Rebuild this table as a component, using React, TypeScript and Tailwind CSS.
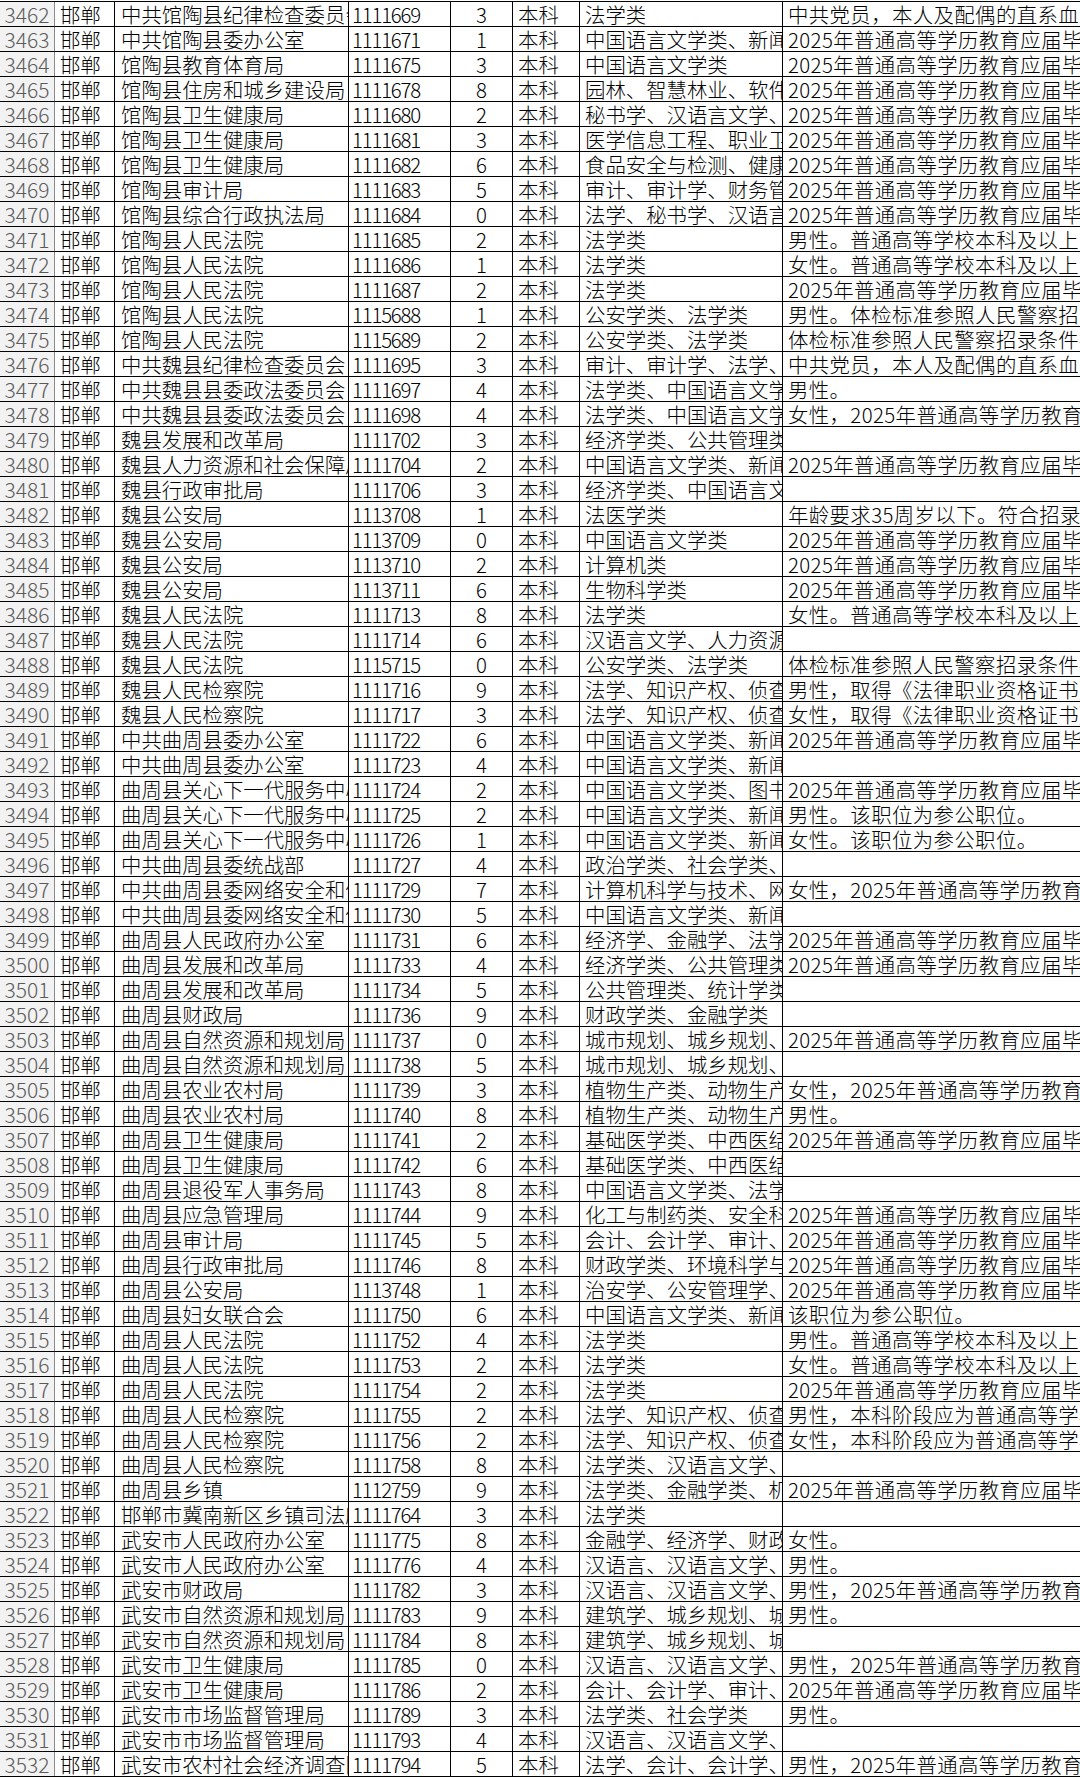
type Row = [number, string, string, string, string, string, string, string];

const rows: Row[] = [
  [3462, "邯郸", "中共馆陶县纪律检查委员会", "1111669", "3", "本科", "法学类", "中共党员，本人及配偶的直系血亲、三代以内旁系血亲"],
  [3463, "邯郸", "中共馆陶县委办公室", "1111671", "1", "本科", "中国语言文学类、新闻传播学类", "2025年普通高等学历教育应届毕业生"],
  [3464, "邯郸", "馆陶县教育体育局", "1111675", "3", "本科", "中国语言文学类", "2025年普通高等学历教育应届毕业生"],
  [3465, "邯郸", "馆陶县住房和城乡建设局", "1111678", "8", "本科", "园林、智慧林业、软件工程", "2025年普通高等学历教育应届毕业生"],
  [3466, "邯郸", "馆陶县卫生健康局", "1111680", "2", "本科", "秘书学、汉语言文学、汉语言", "2025年普通高等学历教育应届毕业生"],
  [3467, "邯郸", "馆陶县卫生健康局", "1111681", "3", "本科", "医学信息工程、职业卫生与职业医学", "2025年普通高等学历教育应届毕业生"],
  [3468, "邯郸", "馆陶县卫生健康局", "1111682", "6", "本科", "食品安全与检测、健康服务与管理", "2025年普通高等学历教育应届毕业生"],
  [3469, "邯郸", "馆陶县审计局", "1111683", "5", "本科", "审计、审计学、财务管理", "2025年普通高等学历教育应届毕业生"],
  [3470, "邯郸", "馆陶县综合行政执法局", "1111684", "0", "本科", "法学、秘书学、汉语言文学", "2025年普通高等学历教育应届毕业生"],
  [3471, "邯郸", "馆陶县人民法院", "1111685", "2", "本科", "法学类", "男性。普通高等学校本科及以上学历"],
  [3472, "邯郸", "馆陶县人民法院", "1111686", "1", "本科", "法学类", "女性。普通高等学校本科及以上学历"],
  [3473, "邯郸", "馆陶县人民法院", "1111687", "2", "本科", "法学类", "2025年普通高等学历教育应届毕业生"],
  [3474, "邯郸", "馆陶县人民法院", "1115688", "1", "本科", "公安学类、法学类", "男性。体检标准参照人民警察招录条件"],
  [3475, "邯郸", "馆陶县人民法院", "1115689", "2", "本科", "公安学类、法学类", "体检标准参照人民警察招录条件执行"],
  [3476, "邯郸", "中共魏县纪律检查委员会", "1111695", "3", "本科", "审计、审计学、法学、会计学", "中共党员，本人及配偶的直系血亲、三代以内旁系血亲"],
  [3477, "邯郸", "中共魏县县委政法委员会", "1111697", "4", "本科", "法学类、中国语言文学类", "男性。"],
  [3478, "邯郸", "中共魏县县委政法委员会", "1111698", "4", "本科", "法学类、中国语言文学类", "女性，2025年普通高等学历教育应届毕业生"],
  [3479, "邯郸", "魏县发展和改革局", "1111702", "3", "本科", "经济学类、公共管理类", ""],
  [3480, "邯郸", "魏县人力资源和社会保障局", "1111704", "2", "本科", "中国语言文学类、新闻传播学类", "2025年普通高等学历教育应届毕业生"],
  [3481, "邯郸", "魏县行政审批局", "1111706", "3", "本科", "经济学类、中国语言文学类", ""],
  [3482, "邯郸", "魏县公安局", "1113708", "1", "本科", "法医学类", "年龄要求35周岁以下。符合招录条件"],
  [3483, "邯郸", "魏县公安局", "1113709", "0", "本科", "中国语言文学类", "2025年普通高等学历教育应届毕业生"],
  [3484, "邯郸", "魏县公安局", "1113710", "2", "本科", "计算机类", "2025年普通高等学历教育应届毕业生"],
  [3485, "邯郸", "魏县公安局", "1113711", "6", "本科", "生物科学类", "2025年普通高等学历教育应届毕业生"],
  [3486, "邯郸", "魏县人民法院", "1111713", "8", "本科", "法学类", "女性。普通高等学校本科及以上学历"],
  [3487, "邯郸", "魏县人民法院", "1111714", "6", "本科", "汉语言文学、人力资源管理", ""],
  [3488, "邯郸", "魏县人民法院", "1115715", "0", "本科", "公安学类、法学类", "体检标准参照人民警察招录条件执行"],
  [3489, "邯郸", "魏县人民检察院", "1111716", "9", "本科", "法学、知识产权、侦查学", "男性，取得《法律职业资格证书》"],
  [3490, "邯郸", "魏县人民检察院", "1111717", "3", "本科", "法学、知识产权、侦查学", "女性，取得《法律职业资格证书》"],
  [3491, "邯郸", "中共曲周县委办公室", "1111722", "6", "本科", "中国语言文学类、新闻传播学类", "2025年普通高等学历教育应届毕业生"],
  [3492, "邯郸", "中共曲周县委办公室", "1111723", "4", "本科", "中国语言文学类、新闻传播学类", ""],
  [3493, "邯郸", "曲周县关心下一代服务中心", "1111724", "2", "本科", "中国语言文学类、图书情报与档案管理类", "2025年普通高等学历教育应届毕业生"],
  [3494, "邯郸", "曲周县关心下一代服务中心", "1111725", "2", "本科", "中国语言文学类、新闻传播学类", "男性。该职位为参公职位。"],
  [3495, "邯郸", "曲周县关心下一代服务中心", "1111726", "1", "本科", "中国语言文学类、新闻传播学类", "女性。该职位为参公职位。"],
  [3496, "邯郸", "中共曲周县委统战部", "1111727", "4", "本科", "政治学类、社会学类、民族学类", ""],
  [3497, "邯郸", "中共曲周县委网络安全和信息化委员会办公室", "1111729", "7", "本科", "计算机科学与技术、网络工程", "女性，2025年普通高等学历教育应届毕业生"],
  [3498, "邯郸", "中共曲周县委网络安全和信息化委员会办公室", "1111730", "5", "本科", "中国语言文学类、新闻传播学类", ""],
  [3499, "邯郸", "曲周县人民政府办公室", "1111731", "6", "本科", "经济学、金融学、法学类", "2025年普通高等学历教育应届毕业生"],
  [3500, "邯郸", "曲周县发展和改革局", "1111733", "4", "本科", "经济学类、公共管理类", "2025年普通高等学历教育应届毕业生"],
  [3501, "邯郸", "曲周县发展和改革局", "1111734", "5", "本科", "公共管理类、统计学类", ""],
  [3502, "邯郸", "曲周县财政局", "1111736", "9", "本科", "财政学类、金融学类", ""],
  [3503, "邯郸", "曲周县自然资源和规划局", "1111737", "0", "本科", "城市规划、城乡规划、土地资源管理", "2025年普通高等学历教育应届毕业生"],
  [3504, "邯郸", "曲周县自然资源和规划局", "1111738", "5", "本科", "城市规划、城乡规划、土地资源管理", ""],
  [3505, "邯郸", "曲周县农业农村局", "1111739", "3", "本科", "植物生产类、动物生产类", "女性，2025年普通高等学历教育应届毕业生"],
  [3506, "邯郸", "曲周县农业农村局", "1111740", "8", "本科", "植物生产类、动物生产类", "男性。"],
  [3507, "邯郸", "曲周县卫生健康局", "1111741", "2", "本科", "基础医学类、中西医结合类", "2025年普通高等学历教育应届毕业生"],
  [3508, "邯郸", "曲周县卫生健康局", "1111742", "6", "本科", "基础医学类、中西医结合类", ""],
  [3509, "邯郸", "曲周县退役军人事务局", "1111743", "8", "本科", "中国语言文学类、法学类", ""],
  [3510, "邯郸", "曲周县应急管理局", "1111744", "9", "本科", "化工与制药类、安全科学与工程类", "2025年普通高等学历教育应届毕业生"],
  [3511, "邯郸", "曲周县审计局", "1111745", "5", "本科", "会计、会计学、审计、审计学", "2025年普通高等学历教育应届毕业生"],
  [3512, "邯郸", "曲周县行政审批局", "1111746", "8", "本科", "财政学类、环境科学与工程类", "2025年普通高等学历教育应届毕业生"],
  [3513, "邯郸", "曲周县公安局", "1113748", "1", "本科", "治安学、公安管理学、侦查学", "2025年普通高等学历教育应届毕业生"],
  [3514, "邯郸", "曲周县妇女联合会", "1111750", "6", "本科", "中国语言文学类、新闻传播学类", "该职位为参公职位。"],
  [3515, "邯郸", "曲周县人民法院", "1111752", "4", "本科", "法学类", "男性。普通高等学校本科及以上学历"],
  [3516, "邯郸", "曲周县人民法院", "1111753", "2", "本科", "法学类", "女性。普通高等学校本科及以上学历"],
  [3517, "邯郸", "曲周县人民法院", "1111754", "2", "本科", "法学类", "2025年普通高等学历教育应届毕业生"],
  [3518, "邯郸", "曲周县人民检察院", "1111755", "2", "本科", "法学、知识产权、侦查学", "男性，本科阶段应为普通高等学校"],
  [3519, "邯郸", "曲周县人民检察院", "1111756", "2", "本科", "法学、知识产权、侦查学", "女性，本科阶段应为普通高等学校"],
  [3520, "邯郸", "曲周县人民检察院", "1111758", "8", "本科", "法学类、汉语言文学、秘书学", ""],
  [3521, "邯郸", "曲周县乡镇", "1112759", "9", "本科", "法学类、金融学类、机械类", "2025年普通高等学历教育应届毕业生"],
  [3522, "邯郸", "邯郸市冀南新区乡镇司法所", "1111764", "3", "本科", "法学类", ""],
  [3523, "邯郸", "武安市人民政府办公室", "1111775", "8", "本科", "金融学、经济学、财政学", "女性。"],
  [3524, "邯郸", "武安市人民政府办公室", "1111776", "4", "本科", "汉语言、汉语言文学、秘书学", "男性。"],
  [3525, "邯郸", "武安市财政局", "1111782", "3", "本科", "汉语言、汉语言文学、会计学", "男性，2025年普通高等学历教育应届毕业生"],
  [3526, "邯郸", "武安市自然资源和规划局", "1111783", "9", "本科", "建筑学、城乡规划、城市设计", "男性。"],
  [3527, "邯郸", "武安市自然资源和规划局", "1111784", "8", "本科", "建筑学、城乡规划、城市设计", ""],
  [3528, "邯郸", "武安市卫生健康局", "1111785", "0", "本科", "汉语言、汉语言文学、秘书学", "男性，2025年普通高等学历教育应届毕业生"],
  [3529, "邯郸", "武安市卫生健康局", "1111786", "2", "本科", "会计、会计学、审计、审计学", "2025年普通高等学历教育应届毕业生"],
  [3530, "邯郸", "武安市市场监督管理局", "1111789", "3", "本科", "法学类、社会学类", "男性。"],
  [3531, "邯郸", "武安市市场监督管理局", "1111793", "4", "本科", "汉语言、汉语言文学、秘书学", ""],
  [3532, "邯郸", "武安市农村社会经济调查队", "1111794", "5", "本科", "法学、会计、会计学、审计学", "男性，2025年普通高等学历教育应届毕业生"],
];

const cell = "shrink-0 overflow-hidden whitespace-nowrap border-r border-black";

export default function App() {
  return (
    <div
      className="w-[1080px] h-[1778px] overflow-hidden bg-white pt-px text-[20.4px] leading-[24px] font-light text-black"
      style={{ fontFamily: '"Noto Sans CJK SC", "Noto Sans", sans-serif' }}
    >
      <div className="border-t border-black">
        {rows.map((r) => (
          <div key={r[0]} className="flex h-[25px] border-b border-black">
            <div className="shrink-0 w-[55px] bg-[#f2f2f2] border-r border-[#8a8a8a] text-center text-[#5a5a5a] text-[21px]">
              {r[0]}
            </div>
            <div className={`${cell} w-[60px] pl-[5px]`}>{r[1]}</div>
            <div className={`${cell} w-[234px] pl-[6px]`}>{r[2]}</div>
            <div className={`${cell} w-[102px] pl-[3px] tracking-[-1.2px]`}>{r[3]}</div>
            <div className={`${cell} w-[62px] text-center`}>{r[4]}</div>
            <div className={`${cell} w-[67px] pl-[5px]`}>{r[5]}</div>
            <div className={`${cell} w-[203px] pl-[5px]`}>{r[6]}</div>
            <div className="min-w-0 flex-1 overflow-hidden whitespace-nowrap pl-[5px] tracking-[0.4px]">{r[7]}</div>
          </div>
        ))}
      </div>
    </div>
  );
}
